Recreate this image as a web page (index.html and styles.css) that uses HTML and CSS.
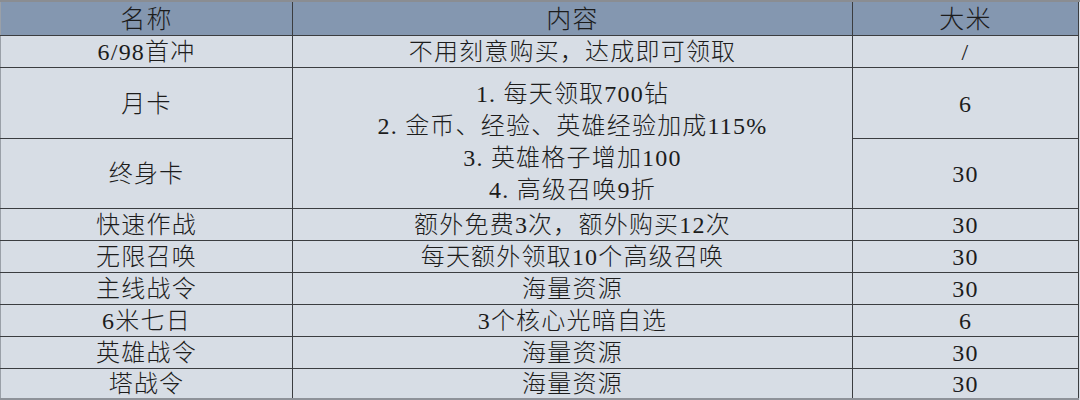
FILE: index.html
```html
<!DOCTYPE html>
<html lang="zh">
<head>
<meta charset="utf-8">
<link rel="stylesheet" href="styles.css">
</head>
<body>
<div class="sheet">
<table class="grid">
  <colgroup>
    <col class="c-name">
    <col class="c-content">
    <col class="c-price">
  </colgroup>
  <thead>
    <tr class="head">
      <th>名称</th>
      <th>内容</th>
      <th>大米</th>
    </tr>
  </thead>
  <tbody>
    <tr class="r-std">
      <td>6/98首冲</td>
      <td>不用刻意购买，达成即可领取</td>
      <td>/</td>
    </tr>
    <tr class="r-tall1">
      <td>月卡</td>
      <td rowspan="2" class="multi">
        <div>1. 每天领取700钻</div>
        <div>2. 金币、经验、英雄经验加成115%</div>
        <div>3. 英雄格子增加100</div>
        <div>4. 高级召唤9折</div>
      </td>
      <td>6</td>
    </tr>
    <tr class="r-tall2">
      <td>终身卡</td>
      <td>30</td>
    </tr>
    <tr class="r-std">
      <td>快速作战</td>
      <td>额外免费3次，额外购买12次</td>
      <td>30</td>
    </tr>
    <tr class="r-std">
      <td>无限召唤</td>
      <td>每天额外领取10个高级召唤</td>
      <td>30</td>
    </tr>
    <tr class="r-std">
      <td>主线战令</td>
      <td>海量资源</td>
      <td>30</td>
    </tr>
    <tr class="r-std">
      <td>6米七日</td>
      <td>3个核心光暗自选</td>
      <td>6</td>
    </tr>
    <tr class="r-std">
      <td>英雄战令</td>
      <td>海量资源</td>
      <td>30</td>
    </tr>
    <tr class="r-last">
      <td>塔战令</td>
      <td>海量资源</td>
      <td>30</td>
    </tr>
  </tbody>
</table>
</div>
</body>
</html>
```

FILE: styles.css
```css
html, body {
  margin: 0;
  padding: 0;
  background: #d7dde5;
}

.sheet {
  width: 1080px;
  height: 400px;
  overflow: hidden;
  background: #d7dde5;
  border-top: 2px solid #8a8d92;
  box-sizing: border-box;
}

.grid {
  border-collapse: collapse;
  table-layout: fixed;
  width: 1078px;
  font-family: "Liberation Serif", "Noto Sans CJK SC", serif;
  font-size: 24px;
  font-weight: 300;
  letter-spacing: 1.2px;
  color: #1c1c1c;
}

.c-name { width: 292px; }
.c-content { width: 560px; }
.c-price { width: 226px; }

.grid th,
.grid td {
  border: 1px solid #3b3d40;
  padding: 0;
  text-align: center;
  vertical-align: middle;
  line-height: 28px;
  font-weight: 300;
}

.grid th {
  background: #8497b0;
  border-top: none;
  height: 31px;
  font-size: 25px;
  padding-top: 2px;
}

.grid td {
  background: #d7dde5;
  padding-top: 1px;
}

.grid tr > :first-child { border-left-color: #9aa0a8; }

.r-std td { height: 30px; }
.r-tall1 td { height: 69px; }
.r-tall2 td { height: 68px; }
.r-last td { height: 28px; border-bottom: 3px solid #8e9299; }

.grid td.multi {
  padding-top: 7px;
}

.multi div {
  line-height: 32px;
}
```
